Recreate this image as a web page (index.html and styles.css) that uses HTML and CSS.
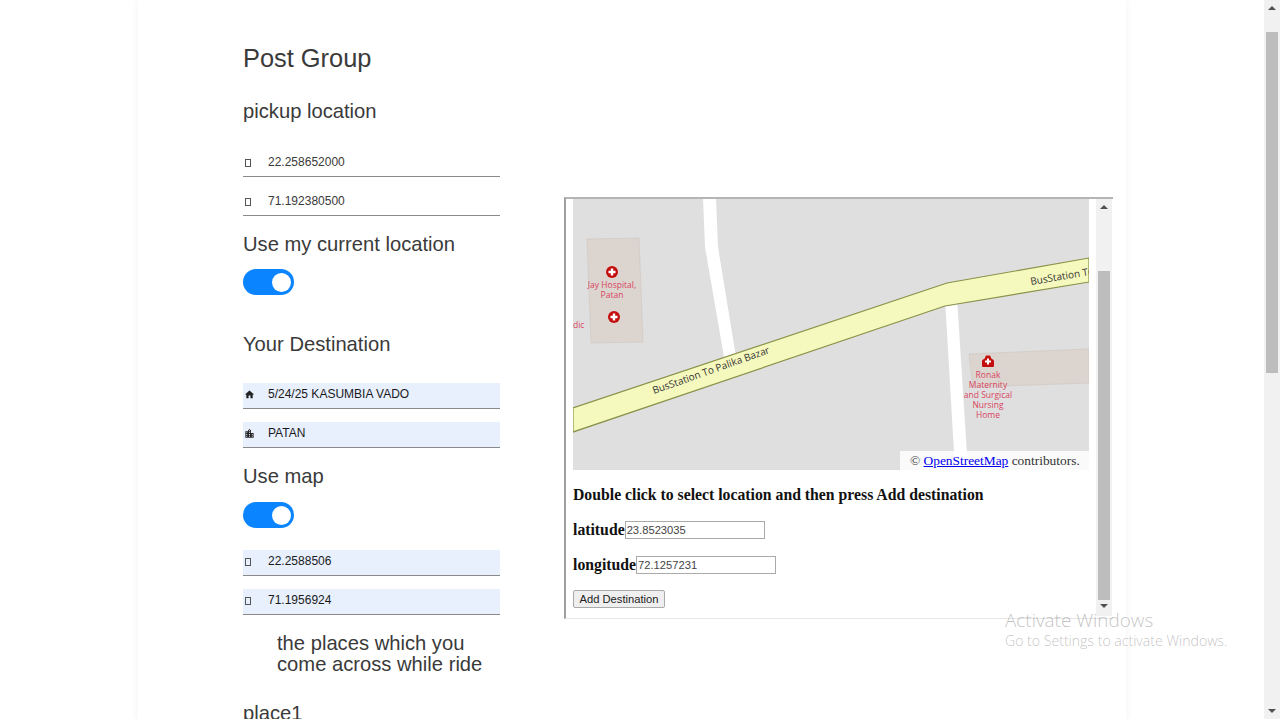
FILE: index.html
```html
<!DOCTYPE html>
<html lang="en">
  <head>
    <meta charset="UTF-8" />
    <meta name="viewport" content="width=device-width, initial-scale=1.0" />
    <title>Post Group</title>
    <link rel="stylesheet" href="styles.css">
  </head>
  <body>
    <div class="app">
      <div class="page">
        <div class="card">
          <div class="form-col">
            <h1>Post Group</h1>
            <h2 class="pickup-title">pickup location</h2>
            <div class="field first-field">
              <span class="field-icon"><span class="missing-icon"></span></span>
              <span>22.258652000</span>
            </div>
            <div class="field">
              <span class="field-icon"><span class="missing-icon"></span></span>
              <span>71.192380500</span>
            </div>
            <h2 class="option-title">Use my current location</h2>
            <div class="toggle"><span class="knob"></span></div>
            <h2 class="dest-title">Your Destination</h2>
            <div class="field filled dest-field">
              <span class="field-icon">
                <svg width="11" height="11" viewBox="0 0 24 24"><path d="M10 20v-6h4v6h5v-8h3L12 3 2 12h3v8z" /></svg>
              </span>
              <span>5/24/25 KASUMBIA VADO</span>
            </div>
            <div class="field filled">
              <span class="field-icon">
                <svg width="11" height="11" viewBox="0 0 24 24"><path d="M15 11V5l-3-3-3 3v2H3v14h18V11h-6zm-8 8H5v-2h2v2zm0-4H5v-2h2v2zm0-4H5V9h2v2zm6 8h-2v-2h2v2zm0-4h-2v-2h2v2zm0-4h-2V9h2v2zm0-4h-2V5h2v2zm6 12h-2v-2h2v2zm0-4h-2v-2h2v2z" /></svg>
              </span>
              <span>PATAN</span>
            </div>
            <h2 class="option-title">Use map</h2>
            <div class="toggle map-toggle"><span class="knob"></span></div>
            <div class="field filled map-field">
              <span class="field-icon"><span class="missing-icon"></span></span>
              <span>22.2588506</span>
            </div>
            <div class="field filled">
              <span class="field-icon"><span class="missing-icon"></span></span>
              <span>71.1956924</span>
            </div>
            <h2 class="places-title">the places which you come across while ride</h2>
            <h2 class="place-title">place1</h2>
          </div>

          <div class="map-frame">
            <div class="frame-body">
              <div class="map">
                <svg class="map-svg" width="516" height="271" viewBox="0 1 516 271">
                  <rect x="0" y="0" width="516" height="272" fill="#dfdfdf" />
                  <polygon points="14,41 66,40 70,144 18,145" fill="#dcd4cf" stroke="#cfc6c0" stroke-width="0.6" />
                  <polygon points="396,156 516,151 516,185 400,189" fill="#dcd4cf" stroke="#cfc6c0" stroke-width="0.6" />
                  <polygon points="130,0 143,0 145,49 164,165 152,165 132,49" fill="#fff" />
                  <polygon points="372,100 384,100 395,272 382,272" fill="#fff" />
                  <polygon points="0,210 374,85 516,60 516,84 372,108 0,234" fill="#f6f9be" stroke="#8a9148" stroke-width="1.2" />

                  <circle cx="39" cy="74" r="6" fill="#c40e0e" />
                  <path d="M37.8 70.5h2.4v2.3h2.3v2.4h-2.3v2.3h-2.4v-2.3h-2.3v-2.4h2.3z" fill="#fff" />
                  <circle cx="41" cy="119" r="6" fill="#c40e0e" />
                  <path d="M39.8 115.5h2.4v2.3h2.3v2.4h-2.3v2.3h-2.4v-2.3h-2.3v-2.4h2.3z" fill="#fff" />
                  <path d="M409 163.5c0-1.5 1-2.2 2.5-2.7l1.5-3.3h4l1.5 3.3c1.500.5 2.500 1.200 2.500 2.700v4.500a1 1 0 0 1-1 1h-10a1 1 0 0 1-1-1z" fill="#c40e0e" />
                  <path d="M414 160.500h2v2h2v2h-2v2h-2v-2h-2v-2h2z" fill="#fff" />

                  <g class="poi-label">
                    <text x="39" y="90">Jay Hospital,</text>
                    <text x="39" y="100">Patan</text>
                    <text x="0" y="130" class="poi-start">dic</text>
                    <text x="415" y="180">Ronak</text>
                    <text x="415" y="190">Maternity</text>
                    <text x="415" y="200">and Surgical</text>
                    <text x="415" y="210">Nursing</text>
                    <text x="415" y="220">Home</text>
                  </g>
                  <text class="road-label" transform="translate(81 196) rotate(-19.500)">BusStation To Palika Bazar</text>
                  <text class="road-label" transform="translate(458 87) rotate(-9.600)">BusStation To Palika Bazar</text>
                </svg>
                <div class="attribution">© <a href="#">OpenStreetMap</a> contributors.</div>
              </div>
              <h3 class="map-hint">Double click to select location and then press Add destination</h3>
              <div class="coord-row lat-row">
                <label for="lat">latitude</label>
                <input type="text" id="lat" value="23.8523035" />
              </div>
              <div class="coord-row lon-row">
                <label for="lon">longitude</label>
                <input type="text" id="lon" value="72.1257231" />
              </div>
              <button type="button">Add Destination</button>
            </div>
            <div class="scrollbar inner-scrollbar">
              <span class="arrow-up"></span>
              <span class="thumb"></span>
              <span class="arrow-down"></span>
            </div>
          </div>
        </div>
      </div>
      <div class="scrollbar page-scrollbar">
        <span class="arrow-up"></span>
        <span class="thumb"></span>
        <span class="arrow-down"></span>
      </div>
      <div class="watermark">
        <div class="watermark-title">Activate Windows</div>
        <div class="watermark-text">Go to Settings to activate Windows.</div>
      </div>
    </div>
  </body>
</html>
```

FILE: styles.css
```css
* {
  box-sizing: border-box;
  margin: 0;
  padding: 0;
}
body {
  background-color: #fff;
  overflow: hidden;
}
.app {
  position: relative;
  display: flex;
  height: 719px;
}
.page {
  flex: 1;
  overflow: hidden;
}
.card {
  display: flex;
  align-items: flex-start;
  width: 988px;
  min-height: 719px;
  margin-left: 138px;
  padding: 43px 0 0 105px;
  background-color: #fff;
  box-shadow: 0 0 8px rgba(0, 0, 0, 0.06);
}

/* left form */
.form-col {
  flex: none;
  width: 257px;
  font-family: "Liberation Sans", Arial, sans-serif;
  color: #3a3a3a;
}
h1 {
  font-size: 25.4px;
  font-weight: 400;
  line-height: 30px;
}
h2 {
  font-size: 20.2px;
  font-weight: 400;
  line-height: 24px;
}
.pickup-title {
  margin-top: 26px;
}
.option-title {
  margin-top: 16px;
}
.dest-title {
  margin-top: 37px;
}
.places-title {
  margin: 18px 0 0 34px;
  line-height: 21px;
}
.place-title {
  margin-top: 26px;
}
.field {
  display: flex;
  align-items: flex-start;
  height: 26px;
  margin-top: 13px;
  padding-top: 4px;
  border-bottom: 1px solid #8a8a8a;
  font-size: 12px;
  line-height: 15px;
  color: #3a3a3a;
}
.field.filled {
  background-color: #e8f0fe;
  color: #1a1a1a;
}
.first-field {
  margin-top: 28px;
}
.dest-field {
  margin-top: 27px;
}
.map-field {
  margin-top: 22px;
}
.field-icon {
  flex: none;
  display: flex;
  align-items: center;
  width: 25px;
  height: 15px;
  padding-left: 1px;
}
.field-icon svg {
  fill: #222;
}
.missing-icon {
  width: 6px;
  height: 8px;
  margin-left: 1px;
  border: 1px solid #555;
}
.toggle {
  display: flex;
  justify-content: flex-end;
  align-items: center;
  width: 51px;
  height: 26px;
  margin-top: 13px;
  padding-right: 3px;
  border-radius: 13px;
  background-color: #0a84ff;
}
.map-toggle {
  margin-top: 14px;
}
.knob {
  width: 19px;
  height: 19px;
  border-radius: 50%;
  background-color: #fff;
}

/* map panel */
.map-frame {
  flex: none;
  display: flex;
  align-items: flex-start;
  width: 549px;
  height: 422px;
  margin: 154px 0 0 64px;
  border-top: 2px solid #b5b5b5;
  border-left: 2px solid #a0a0a0;
  border-bottom: 1px solid #e6e6e6;
  font-family: "Liberation Serif", "Times New Roman", serif;
  color: #111;
}
.frame-body {
  flex: none;
  width: 530px;
  padding-left: 7px;
}
.map {
  position: relative;
  width: 516px;
  height: 271px;
}
.map-svg {
  display: block;
}
.poi-label {
  font-family: "Open Sans", sans-serif;
  font-size: 8.5px;
  fill: #d9455f;
  text-anchor: middle;
}
.poi-start {
  text-anchor: start;
}
.road-label {
  font-family: "Open Sans", sans-serif;
  font-size: 10px;
  fill: #333;
}
.attribution {
  position: absolute;
  right: 0;
  bottom: 0;
  width: 189px;
  height: 19px;
  padding-left: 10px;
  background-color: rgba(255, 255, 255, 0.85);
  font-size: 13.4px;
  line-height: 19px;
  color: #333;
}
.attribution a {
  color: #0000ee;
}
.map-hint {
  margin-top: 16px;
  font-size: 15.75px;
  line-height: 18px;
}
.coord-row {
  display: flex;
  align-items: center;
  font-size: 15.75px;
  font-weight: 700;
}
.lat-row {
  margin-top: 17px;
}
.lon-row {
  margin-top: 17px;
}
.coord-row input {
  width: 140px;
  height: 18px;
  padding: 0 1px;
  border: 1px solid #aaa;
  font-family: "Liberation Sans", Arial, sans-serif;
  font-size: 11.2px;
  color: #444;
}
button {
  display: block;
  width: 92px;
  height: 18px;
  margin-top: 16px;
  border: 1px solid #aaa;
  border-radius: 2px;
  background-color: #efefef;
  font-family: "Liberation Sans", Arial, sans-serif;
  font-size: 11.2px;
  color: #222;
}

/* scrollbars */
.scrollbar {
  flex: none;
  display: flex;
  flex-direction: column;
  align-items: center;
  width: 16px;
  background-color: #f1f1f1;
}
.page-scrollbar {
  height: 719px;
  padding-top: 6px;
}
.page-scrollbar .thumb {
  height: 341px;
  margin-top: 22px;
}
.page-scrollbar .arrow-down {
  margin-top: auto;
  margin-bottom: 6px;
}
.inner-scrollbar {
  height: 417px;
  padding-top: 6px;
}
.inner-scrollbar .thumb {
  height: 329px;
  margin-top: 62px;
}
.inner-scrollbar .arrow-down {
  margin-top: 4px;
}
.thumb {
  width: 12px;
  background-color: #bdbdbd;
}
.arrow-up,
.arrow-down {
  width: 0;
  height: 0;
  border-left: 4px solid transparent;
  border-right: 4px solid transparent;
}
.arrow-up {
  border-bottom: 4px solid #505050;
}
.arrow-down {
  border-top: 4px solid #505050;
}

/* windows watermark */
.watermark {
  position: absolute;
  left: 1005px;
  top: 608px;
  font-family: "Open Sans", sans-serif;
  font-weight: 300;
  color: rgba(110, 110, 110, 0.42);
  pointer-events: none;
}
.watermark-title {
  font-size: 18.9px;
  line-height: 24px;
}
.watermark-text {
  font-size: 14.1px;
  line-height: 18px;
}
```
